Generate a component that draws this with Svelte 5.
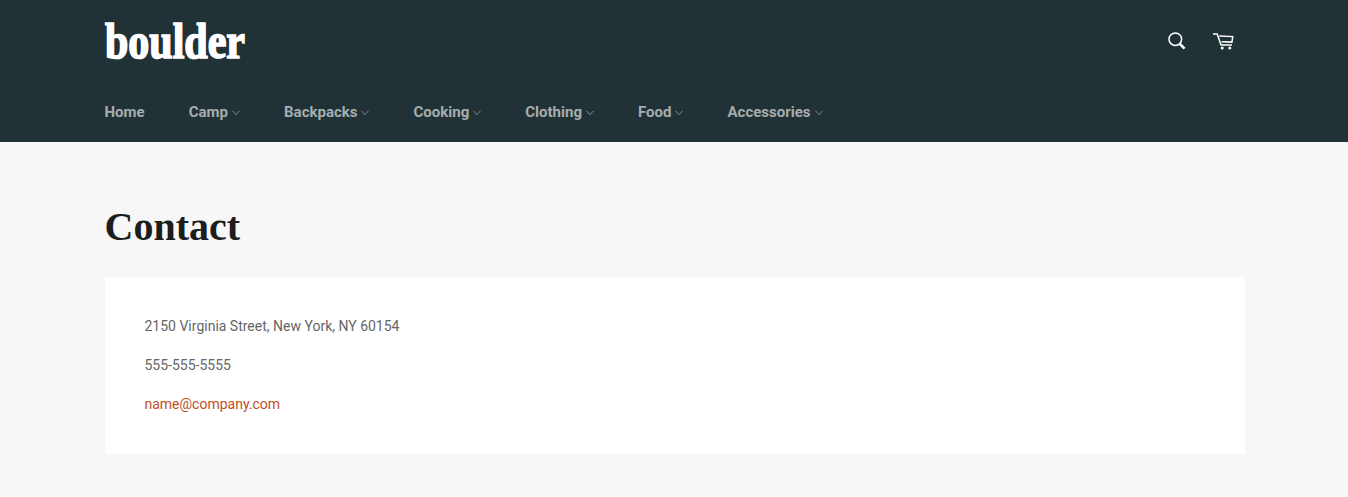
<script>
  const links = [
    { label: 'Home', menu: false },
    { label: 'Camp', menu: true },
    { label: 'Backpacks', menu: true },
    { label: 'Cooking', menu: true },
    { label: 'Clothing', menu: true },
    { label: 'Food', menu: true },
    { label: 'Accessories', menu: true }
  ];
</script>

<header>
  <div class="wrap">
    <div class="top">
      <a class="logo" href="#home">
        <svg width="142" height="44" viewBox="0 0 142 44">
          <text x="0" y="37.5" textLength="140" lengthAdjust="spacingAndGlyphs">boulder</text>
        </svg>
      </a>
      <div class="actions">
        <button aria-label="Search">
          <svg width="19" height="19" viewBox="0 0 19 19" fill="none" stroke="#fff">
            <circle cx="7.3" cy="7.2" r="6.3" stroke-width="1.5" />
            <path d="M11.7 11.8 L16.6 16.6" stroke-width="2.6" />
          </svg>
        </button>
        <button aria-label="Cart">
          <svg width="22" height="19" viewBox="0 0 22 19" fill="none" stroke="#fff" stroke-width="1.5">
            <path d="M0 1.9H4.2L8 13.1H19" />
            <path d="M6.3 4 L19.8 4.6 L18.9 10.1 L8.6 9.7" />
            <circle cx="9.2" cy="16" r="1.5" fill="#fff" stroke="none" />
            <circle cx="16.8" cy="16" r="1.5" fill="#fff" stroke="none" />
          </svg>
        </button>
      </div>
    </div>
    <nav>
      {#each links as link}
        <a href="#{link.label}">
          {link.label}
          {#if link.menu}
            <svg width="8" height="6" viewBox="0 0 8 6" fill="none" stroke="currentColor" stroke-width="0.75">
              <path d="M.5 .8 L4 4.6 L7.5 .8" />
            </svg>
          {/if}
        </a>
      {/each}
    </nav>
  </div>
</header>

<main class="wrap">
  <h1>Contact</h1>
  <section>
    <p>2150 Virginia Street, New York, NY 60154</p>
    <p>555-555-5555</p>
    <p><a href="mailto:name@company.com">name@company.com</a></p>
  </section>
</main>

<style>
  :global(body) {
    background: #f7f7f7;
    font-family: Roboto, sans-serif;
  }
  a {
    text-decoration: none;
  }
  .wrap {
    width: 1140px;
    margin-left: 104.5px;
  }
  header {
    background: #213236;
    height: 142px;
    overflow: hidden;
  }
  .top {
    display: flex;
    justify-content: space-between;
    height: 82px;
  }
  .logo {
    padding-top: 20px;
  }
  .logo svg {
    display: block;
    overflow: visible;
  }
  .logo text {
    font: bold 50px 'Liberation Serif', serif;
    fill: #fff;
    stroke: #fff;
    stroke-width: 1.7;
  }
  .actions {
    display: flex;
    align-items: flex-start;
    gap: 26px;
    padding: 32px 9.5px 0 0;
  }
  button {
    padding: 0;
    border: 0;
    background: none;
  }
  button svg {
    display: block;
  }
  nav {
    display: flex;
    gap: 44.05px;
    height: 60px;
    line-height: 60px;
  }
  nav a {
    display: flex;
    align-items: center;
    gap: 4px;
    color: #a6adaf;
    font-size: 15px;
    font-weight: 700;
  }
  nav svg {
    margin-top: 2px;
  }
  h1 {
    margin: 0;
    padding-top: 60px;
    height: 75px;
    line-height: 50px;
    font-family: 'Liberation Serif', serif;
    font-size: 40px;
    color: #1c1d1d;
  }
  section {
    box-sizing: border-box;
    height: 177px;
    padding: 39px 40px;
    background: #fff;
  }
  p {
    margin: 0 0 18px;
    line-height: 21px;
    font-size: 14px;
    color: #666;
  }
  p a {
    color: #c04f20;
  }
</style>
